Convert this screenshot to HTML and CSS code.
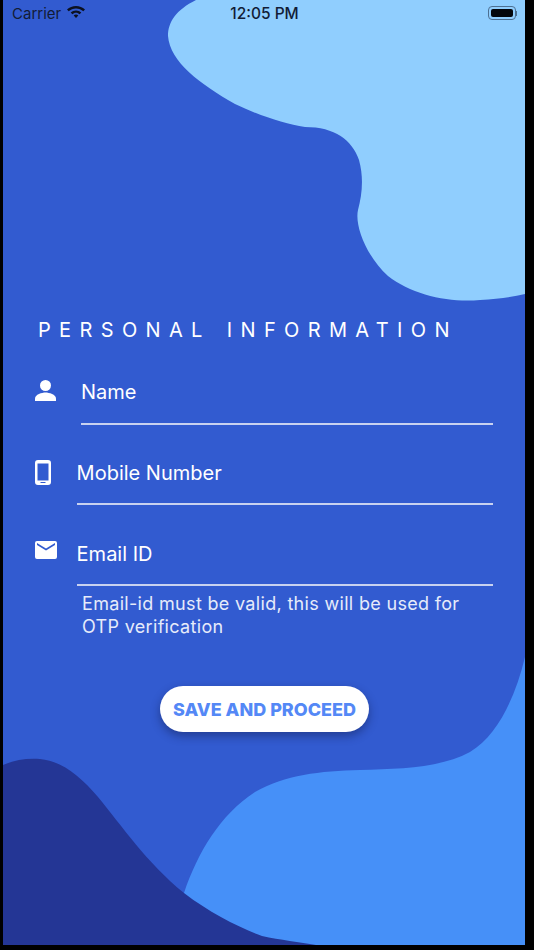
FILE: index.html
```html
<!DOCTYPE html>
<html lang="en">
<head>
<meta charset="utf-8">
<title>Personal Information</title>
<link rel="stylesheet" href="styles.css">
</head>
<body>
<main class="phone">
  <svg class="bg" viewBox="3 0 522 945" aria-hidden="true">
    <path fill="#90cefe" d="M196 0C176 10 168 22 168 36C170 62 200 84 235 104C260 116 285 124 305 127C335 127 352 140 359 160C364 178 362 195 358 210C354.500 225 366 256 388 276C412 295 450 303 480 300C498 299 512 297 525 294V0Z"/>
    <path fill="#4690f8" d="M184 893C198 852 220 815 255 792C285 775 320 771 360 770C400 769 440 768 470 752C498 736 516 695 525 657V945H184Z"/>
    <path fill="#243695" d="M3 765C14 760 27 758 40 759C62 761 80 776 98 797C122 826 146 862 184 893C210 913 240 928 262 936C280 940 300 942 316 945H3Z"/>
  </svg>

  <header class="status">
    <div class="status-left">
      <span>Carrier</span>
      <svg class="wifi" viewBox="0 0 20 14"><path d="M10 2C6.500 2 3.400 3.300 1 5.500L2.700 7.300C4.600 5.500 7.200 4.400 10 4.400S15.400 5.500 17.300 7.300L19 5.500C16.600 3.300 13.500 2 10 2ZM10 6.400C8 6.400 6.100 7.200 4.700 8.500L6.400 10.300C7.400 9.400 8.600 8.800 10 8.800S12.600 9.400 13.600 10.300L15.300 8.500C13.900 7.200 12 6.400 10 6.400ZM10 10.600C9.100 10.600 8.300 10.900 7.700 11.500L10 14L12.300 11.500C11.700 10.900 10.900 10.600 10 10.600Z"/></svg>
    </div>
    <time class="clock">12:05 PM</time>
    <div class="status-right">
      <div class="battery"><span class="battery-fill"></span></div>
      <span class="battery-nub"></span>
    </div>
  </header>

  <section class="form">
    <h1 class="title">PERSONAL INFORMATION</h1>

    <div class="row row-name">
      <svg class="icon icon-person" viewBox="0 0 21 21"><circle cx="10.500" cy="5.500" r="5.500"/><path d="M0 21v-2.500C0 14.500 7 12.500 10.500 12.500S21 14.500 21 18.500V21Z"/></svg>
      <div class="field">Name</div>
    </div>

    <div class="row row-mobile">
      <svg class="icon icon-mobile" viewBox="0 0 16 25"><path fill-rule="evenodd" d="M3 0h10a3 3 0 0 1 3 3v19a3 3 0 0 1-3 3H3a3 3 0 0 1-3-3V3a3 3 0 0 1 3-3Zm-.500 3.500v17h11v-17ZM5.500 22v1h5v-1Z"/></svg>
      <div class="field">Mobile Number</div>
    </div>

    <div class="row row-email">
      <svg class="icon icon-mail" viewBox="0 0 22 18"><path fill-rule="evenodd" d="M2 0h18a2 2 0 0 1 2 2v14a2 2 0 0 1-2 2H2a2 2 0 0 1-2-2V2a2 2 0 0 1 2-2Zm0 4 9 5.600L20 4V2l-9 5.600L2 2Z"/></svg>
      <div class="field">Email ID</div>
    </div>

    <p class="hint">Email-id must be valid, this will be used for OTP verification</p>

    <button class="save" type="button">SAVE AND PROCEED</button>
  </section>
</main>
</body>
</html>
```

FILE: styles.css
```css
* { box-sizing: border-box; }

html, body {
  margin: 0;
  height: 950px;
  background: #000;
  overflow: hidden;
}

.phone {
  position: relative;
  width: 522px;
  height: 945px;
  margin-left: 3px;
  background: #325bd0;
  overflow: hidden;
  font-family: Inter, "Liberation Sans", sans-serif;
  color: #fff;
}

.bg {
  position: absolute;
  inset: 0;
  width: 522px;
  height: 945px;
}

.status {
  position: relative;
  display: grid;
  grid-template-columns: 1fr auto 1fr;
  align-items: center;
  height: 26px;
  padding: 0 8px 0 9px;
  color: #121c36;
  font-size: 15px;
}

.status-left {
  display: flex;
  align-items: center;
  gap: 5px;
}

.wifi {
  width: 20px;
  height: 14px;
  margin-top: -4px;
  fill: #0c1120;
}

.clock {
  font-weight: 500;
  font-size: 15.500px;
}

.status-right {
  display: flex;
  align-items: center;
  justify-content: flex-end;
}

.battery {
  display: flex;
  width: 28px;
  height: 14px;
  padding: 2px;
  border: 1px solid #4d7092;
  border-radius: 4px;
}

.battery-fill {
  flex: 1;
  background: #05070c;
  border-radius: 2px;
}

.battery-nub {
  width: 1px;
  height: 5px;
  background: #4d7092;
}

.form {
  position: relative;
  padding-top: 292px;
}

.title {
  margin: 0 0 0 35px;
  font-size: 20px;
  line-height: 24px;
  font-weight: 400;
  letter-spacing: 8.350px;
  word-spacing: 2px;
  white-space: nowrap;
}

.row {
  display: flex;
  align-items: flex-start;
  margin-right: 32px;
  padding-left: 32px;
}

.row-name { margin-top: 38px; }
.row-mobile { margin-top: 35px; }
.row-email { margin-top: 36px; }

.icon {
  flex: none;
  fill: #fff;
}

.icon-person {
  width: 21px;
  height: 21px;
  margin-right: 25px;
}

.icon-mobile {
  width: 16px;
  height: 25px;
  margin-right: 25.600px;
}

.icon-mail {
  width: 22px;
  height: 18px;
  margin-right: 19.600px;
}

.field {
  flex: 1;
  height: 45px;
  padding-top: 1px;
  font-size: 20px;
  line-height: 24px;
  border-bottom: 2px solid #c8d2f0;
}

.row-name .field { padding-top: 0; }

.hint {
  margin: 6px 60px 0 79px;
  font-size: 18px;
  line-height: 23px;
  letter-spacing: .32px;
  color: #e6ebfa;
}

.save {
  display: block;
  width: 209px;
  height: 46px;
  margin: 48px 0 0 157px;
  border: 0;
  border-radius: 23px;
  background: #fff;
  color: #5488f6;
  font: 800 18px Inter, "Liberation Sans", sans-serif;
  box-shadow: 0 4px 10px rgba(15, 25, 70, .45);
}
```
